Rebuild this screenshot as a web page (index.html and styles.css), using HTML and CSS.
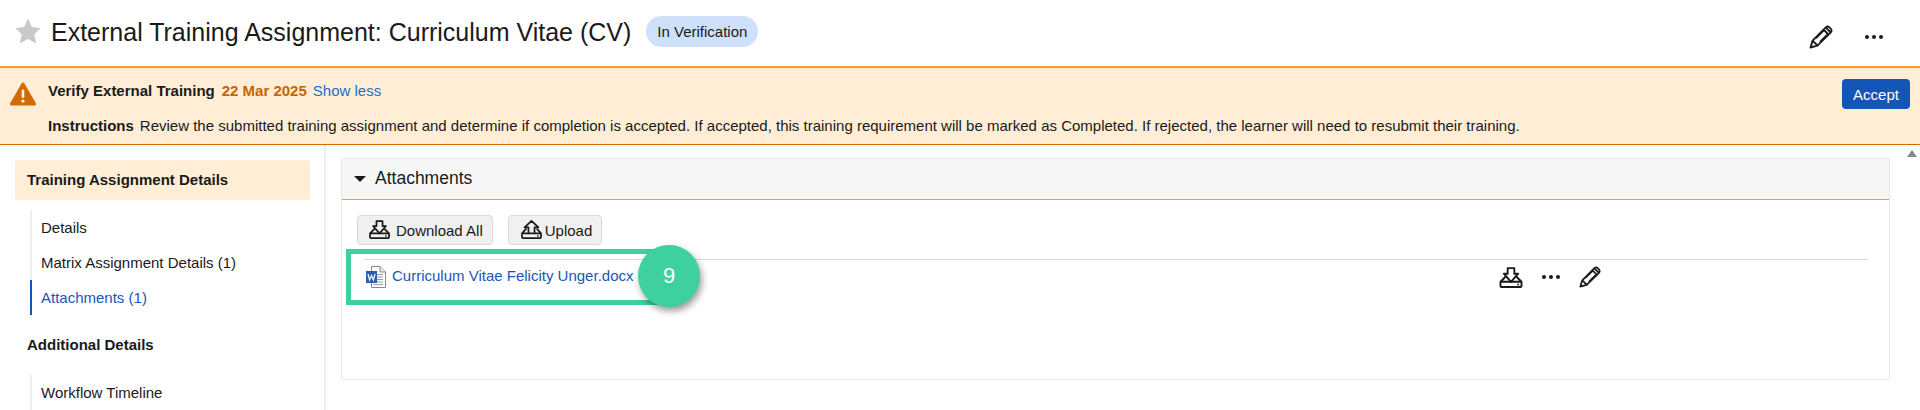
FILE: index.html
```html
<!DOCTYPE html>
<html lang="en">
<head>
<meta charset="utf-8">
<title>External Training Assignment</title>
<link rel="stylesheet" href="styles.css">
</head>
<body>
<svg class="defs" width="0" height="0" aria-hidden="true">
  <symbol id="pencil" viewBox="0 0 24 24">
    <path d="M1.5 22.5 L3.6 15.6 L16.8 2.4 Q18.6 .8 20.4 2.4 L21.8 3.8 Q23.3 5.6 21.8 7.4 L8.4 20.6 Z M3.8 15.8 L8.2 20.2 M7 13 L15 5 L19 9 L11 17 M16.8 2.6 L21.6 7.4" fill="none" stroke="currentColor" stroke-width="1.9" stroke-linejoin="round"/>
  </symbol>
  <symbol id="download" viewBox="0 0 24 22">
    <path d="M6.5 10 L1 15.5 V20 Q1 21 2 21 H22 Q23 21 23 20 V15.5 L17.5 10 M1 15.5 H23" fill="none" stroke="currentColor" stroke-width="2" stroke-linejoin="round"/>
    <path d="M8.5 1.2 H15.5 V7 H19.5 L12 15.5 L4.5 7 H8.5 Z" fill="#fff" stroke="currentColor" stroke-width="2" stroke-linejoin="round"/>
    <circle cx="19.5" cy="18.3" r="1" fill="currentColor"/>
  </symbol>
  <symbol id="download-btn" viewBox="0 0 24 22">
    <path d="M6.5 10 L1 15.5 V20 Q1 21 2 21 H22 Q23 21 23 20 V15.5 L17.5 10 M1 15.5 H23" fill="none" stroke="currentColor" stroke-width="2" stroke-linejoin="round"/>
    <path d="M8.5 1.2 H15.5 V7 H19.5 L12 15.5 L4.5 7 H8.5 Z" fill="#f0f0f0" stroke="currentColor" stroke-width="2" stroke-linejoin="round"/>
    <circle cx="19.5" cy="18.3" r="1" fill="currentColor"/>
  </symbol>
  <symbol id="upload" viewBox="0 0 24 22">
    <path d="M6 10 L1 15.5 V20 Q1 21 2 21 H22 Q23 21 23 20 V15.5 L18 10 M1 15.5 H8.5 M15.5 15.5 H23" fill="none" stroke="currentColor" stroke-width="2" stroke-linejoin="round"/>
    <path d="M8.5 15.5 H15.5 V8.5 H20 L12 1 L4 8.5 H8.5 Z" fill="#f0f0f0" stroke="currentColor" stroke-width="2" stroke-linejoin="round"/>
    <circle cx="19.5" cy="18.3" r="1" fill="currentColor"/>
  </symbol>
</svg>

<header class="page-head">
  <svg class="star" viewBox="0 0 24 24" aria-hidden="true"><path d="M12 .8 L15.4 8.2 L23.4 9.1 L17.5 14.5 L19.1 22.5 L12 18.5 L4.9 22.5 L6.5 14.5 L.6 9.1 L8.6 8.2 Z" stroke-linejoin="round"/></svg>
  <h1 class="title">External Training Assignment: Curriculum Vitae (CV)</h1>
  <span class="chip">In Verification</span>
  <div class="head-actions">
    <svg class="icon-pencil-lg"><use href="#pencil"/></svg>
    <span class="dots"><i></i><i></i><i></i></span>
  </div>
</header>

<section class="banner">
  <svg class="warn" viewBox="0 0 26 24" aria-hidden="true">
    <path d="M13 2 L24.5 22 H1.5 Z" fill="#d26a00" stroke="#d26a00" stroke-width="3" stroke-linejoin="round"/>
    <rect x="11.7" y="7.5" width="2.6" height="8.5" rx="1.2" fill="#fff"/>
    <circle cx="13" cy="19" r="1.6" fill="#fff"/>
  </svg>
  <div class="banner-text">
    <div class="banner-line">
      <strong>Verify External Training</strong>
      <strong class="due">22 Mar 2025</strong>
      <a class="more">Show less</a>
    </div>
    <div class="banner-line">
      <strong>Instructions</strong>
      <span>Review the submitted training assignment and determine if completion is accepted. If accepted, this training requirement will be marked as Completed. If rejected, the learner will need to resubmit their training.</span>
    </div>
  </div>
  <button class="accept">Accept</button>
</section>

<div class="body">
  <nav class="side">
    <div class="side-active">Training Assignment Details</div>
    <ul class="side-list">
      <li>Details</li>
      <li>Matrix Assignment Details (1)</li>
      <li class="current">Attachments (1)</li>
    </ul>
    <div class="side-head">Additional Details</div>
    <ul class="side-list">
      <li>Workflow Timeline</li>
    </ul>
  </nav>
  <main class="content">
    <section class="panel">
      <div class="panel-head"><span class="caret"></span>Attachments</div>
      <div class="panel-body">
        <div class="toolbar">
          <button class="btn btn-download"><svg class="btn-icon"><use href="#download-btn"/></svg>Download All</button>
          <button class="btn btn-upload"><svg class="btn-icon"><use href="#upload"/></svg>Upload</button>
        </div>
        <div class="file-row">
          <svg class="doc" viewBox="0 0 20 22" aria-hidden="true">
            <path d="M5.5 .5 H14 L19.5 6 V21.5 H5.5 Z" fill="#fff" stroke="#8a8a8a"/>
            <path d="M14 .5 V6 H19.5" fill="#e6e6e6" stroke="#8a8a8a"/>
            <path d="M11 8.5 H17 M11 11 H17 M11 13.5 H17 M11 16 H17 M7 18.6 H17" stroke="#9a9a9a"/>
            <rect x="0" y="5" width="11" height="12" fill="#2b5fb0"/>
            <path d="M2 8 L3.6 14 L5.5 9.5 L7.4 14 L9 8" fill="none" stroke="#fff" stroke-width="1.2"/>
          </svg>
          <a class="file-link">Curriculum Vitae Felicity Unger.docx</a>
          <div class="file-actions">
            <svg class="row-icon"><use href="#download"/></svg>
            <span class="dots"><i></i><i></i><i></i></span>
            <svg class="row-pencil"><use href="#pencil"/></svg>
          </div>
        </div>
      </div>
      <div class="callout-box"></div>
      <div class="callout-num">9</div>
    </section>
  </main>
  <div class="scroll"><span class="scroll-up"></span></div>
</div>
</body>
</html>
```
FILE: styles.css
```css
* { box-sizing: border-box; }
html, body { margin: 0; height: 410px; overflow: hidden; background: #fff; }
body { font-family: "Liberation Sans", Arial, sans-serif; font-size: 15px; color: #1a1a1a; }
.defs { position: absolute; }

.page-head { height: 66px; display: flex; align-items: center; padding: 0 15px 0 15px; }
.star { width: 26px; height: 25px; fill: #c9c9c9; stroke: #c9c9c9; margin: 0 10px 4px 0; flex: none; }
.title { margin: 0 0 2px; font-size: 25px; font-weight: 400; line-height: 32px; }
.chip { margin: 0 0 3px 15px; width: 112px; height: 31px; border-radius: 16px; background: #cfe0fa; font-size: 15px; line-height: 31px; text-align: center; }
.head-actions { margin-left: auto; display: flex; align-items: center; padding-right: 22px; gap: 32px; }
.icon-pencil-lg { width: 24px; height: 24px; color: #1a1a1a; margin-top: 8px; }
.dots { display: inline-flex; gap: 3px; }
.dots i { width: 4px; height: 4px; border-radius: 50%; background: #1a1a1a; display: block; }
.head-actions .dots { margin-top: 8px; }

.banner { height: 79px; display: flex; align-items: flex-start; background: #ffeed5; border-top: 2px solid #fb9a2e; border-bottom: 1px solid #d26a00; padding: 10px 10px 0 10px; }
.warn { width: 26px; height: 24px; flex: none; margin: 4px 12px 0 0; }
.banner-text { flex: 1; }
.banner-line { height: 35px; line-height: 26px; display: flex; gap: 6px; }
.due { color: #c76400; margin-left: 1px; }
.more { color: #1a6fd0; }
.accept { width: 68px; height: 30px; margin-top: 1px; border: 0; border-radius: 4px; background: #1356b8; color: #fff; font: 15px "Liberation Sans", Arial, sans-serif; padding: 0; }

.body { display: flex; height: 265px; }
.side { width: 326px; flex: none; border-right: 2px solid #eee; padding: 15px 15px 0 15px; }
.side-active { height: 40px; width: 295px; background: #ffeed5; border-radius: 2px; font-weight: 700; line-height: 40px; padding-left: 12px; }
.side-list { list-style: none; margin: 10px 0 0 15px; padding: 0; border-left: 2px solid #eee; }
.side-list li { height: 35px; line-height: 36px; padding-left: 9px; margin-left: -2px; border-left: 2px solid transparent; }
.side-list li.current { color: #1a56b8; border-left-color: #1356b8; }
.side-head { margin: 18px 0 0 12px; height: 24px; line-height: 24px; font-weight: 700; }
.side-head + .side-list { margin-top: 18px; }

.content { flex: 1; padding: 13px 0 0 15px; min-width: 0; }
.panel { position: relative; height: 222px; margin-right: -1px; border: 1px solid #e8e8e8; border-radius: 2px; }
.panel-head { height: 41px; background: #f7f7f7; border-bottom: 1px solid #fb9a2e; font-size: 17.5px; padding: 0 0 2px 12px; display: flex; align-items: center; }
.caret { width: 0; height: 0; border-left: 6px solid transparent; border-right: 6px solid transparent; border-top: 6px solid #1a1a1a; margin-right: 9px; margin-top: 2px; }
.panel-body { padding: 15px 21px 0 15px; }
.toolbar { display: flex; gap: 15px; height: 30px; }
.btn { display: flex; align-items: center; height: 30px; padding: 1px 9px 0 11px; background: #f0f0f0; border: 1px solid #d9d9d9; border-radius: 4px; font: 15px "Liberation Sans", Arial, sans-serif; color: #1a1a1a; }
.btn-icon { width: 21px; height: 19px; margin: -2px 6px 0 0; color: #1a1a1a; }
.btn-upload .btn-icon { margin-right: 3px; }
.btn-upload { padding-left: 12px; }
.file-row { position: relative; display: flex; align-items: flex-start; height: 35px; margin: 14px 0 0 6px; border-top: 1px solid #d9d9d9; padding: 6px 0 0 3px; }
.doc { width: 20px; height: 22px; flex: none; margin-right: 6px; }
.file-link { color: #1a56b8; line-height: 20px; }
.file-actions { margin-left: auto; margin-right: 267px; display: flex; align-items: center; gap: 19px; height: 22px; }
.row-icon { width: 24px; height: 21px; color: #1a1a1a; }
.row-pencil { width: 22px; height: 22px; color: #1a1a1a; }

.callout-box { position: absolute; left: 4px; top: 90px; width: 320px; height: 56px; border: 5px solid #3fd09f; }
.callout-num { position: absolute; left: 296px; top: 86px; width: 62px; height: 62px; border-radius: 50%; background: #3fd09f; color: #fff; font-size: 22px; line-height: 62px; text-align: center; box-shadow: 2px 4px 7px rgba(0,0,0,.4); }

.scroll { width: 31px; flex: none; position: relative; }
.scroll-up { position: absolute; right: 3px; top: 5px; width: 0; height: 0; border-left: 5px solid transparent; border-right: 5px solid transparent; border-bottom: 7px solid #888; }
```
